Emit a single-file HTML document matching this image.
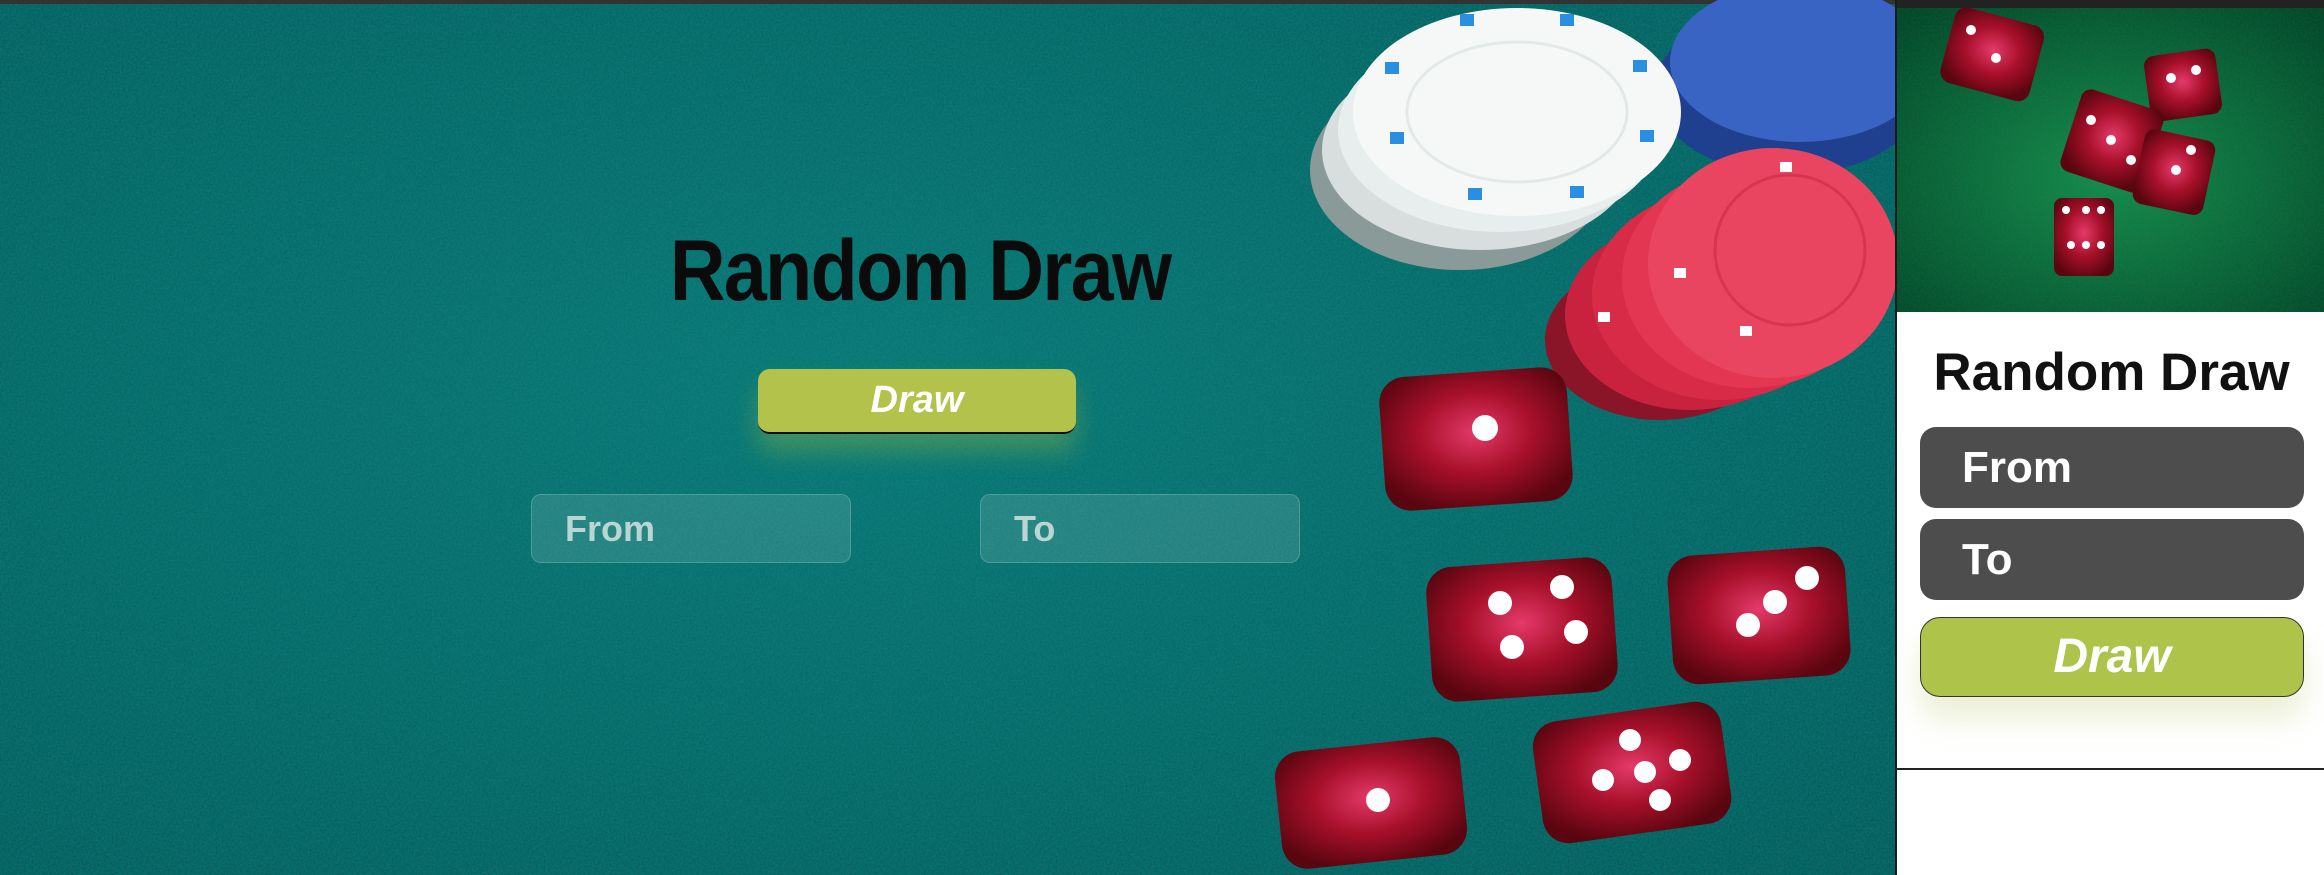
<!DOCTYPE html>
<html><head><meta charset="utf-8"><style>
*{margin:0;padding:0;box-sizing:border-box}
body{width:2324px;height:875px;overflow:hidden;background:#fff;font-family:"Liberation Sans",Arial,sans-serif;position:relative}
#bg{position:absolute;left:0;top:0}
.t1{position:absolute;left:560px;width:720px;top:222px;text-align:center;font-weight:bold;font-size:86px;color:#0b0b0b;letter-spacing:-2px;transform:scaleX(0.9)}
.b1{position:absolute;left:758px;top:369px;width:318px;height:65px;background:#b3c24a;border-radius:12px;border-bottom:2px solid #111;box-shadow:0 18px 25px rgba(160,190,60,.35);color:#fff;font-style:italic;font-weight:bold;font-size:38px;text-align:center;line-height:63px}
.in1{position:absolute;top:494px;width:320px;height:69px;background:rgba(255,255,255,.12);border:1px solid rgba(255,255,255,.18);border-radius:10px;color:#b9d6d2;font-size:36px;font-weight:bold;line-height:67px;padding-left:33px}
#panel{position:absolute;left:1895px;top:0;width:429px;height:875px;background:#fff;border-left:2px solid #1a1a1a}
.t2{position:absolute;left:0;width:429px;top:342px;text-align:center;font-weight:bold;font-size:53px;color:#111}
.in2{position:absolute;left:23px;width:384px;height:81px;background:#4d4d4d;border-radius:16px;color:#fff;font-weight:bold;font-size:44px;line-height:81px;padding-left:42px}
.b2{position:absolute;left:23px;top:617px;width:384px;height:80px;background:#aec34a;border:1.5px solid #333;border-radius:20px;color:#fff;font-style:italic;font-weight:bold;font-size:48px;text-align:center;line-height:77px;box-shadow:0 22px 30px rgba(200,210,140,.35)}
</style></head><body>
<svg id="bg" width="1896" height="875" viewBox="0 0 1896 875">
<defs>
<radialGradient id="felt" cx="45%" cy="45%" r="75%"><stop offset="0" stop-color="#0f706c"/><stop offset="1" stop-color="#09504e"/></radialGradient>
<radialGradient id="die" cx="50%" cy="45%" r="60%"><stop offset="0" stop-color="#e43a6a"/><stop offset=".5" stop-color="#a8102a"/><stop offset="1" stop-color="#5a0610"/></radialGradient>
<filter id="n"><feTurbulence type="fractalNoise" baseFrequency=".5" numOctaves="2"/><feColorMatrix values="0 0 0 0 0  0 0 0 0 .35  0 0 0 0 .35  0 0 0 .5 0"/></filter>
</defs>
<rect width="1896" height="875" fill="url(#felt)"/>
<rect width="1896" height="875" filter="url(#n)"/>
<rect width="1896" height="4" fill="#333"/>
<ellipse cx="1790" cy="90" rx="135" ry="85" fill="#1f3f8f"/>
<ellipse cx="1800" cy="62" rx="130" ry="80" fill="#3a64c4"/>
<ellipse cx="1460" cy="170" rx="150" ry="100" fill="#8a9a98"/>
<ellipse cx="1480" cy="150" rx="158" ry="100" fill="#d7dedd"/>
<ellipse cx="1500" cy="130" rx="162" ry="102" fill="#e8eeee"/>
<ellipse cx="1517" cy="112" rx="164" ry="104" fill="#f6f8f8"/>
<ellipse cx="1517" cy="112" rx="110" ry="70" fill="none" stroke="#e3e8e8" stroke-width="3"/>
<g fill="#2a8fe0"><rect x="1460" y="14" width="14" height="12"/><rect x="1560" y="14" width="14" height="12"/><rect x="1385" y="62" width="14" height="12"/><rect x="1633" y="60" width="14" height="12"/><rect x="1390" y="132" width="14" height="12"/><rect x="1640" y="130" width="14" height="12"/><rect x="1468" y="188" width="14" height="12"/><rect x="1570" y="186" width="14" height="12"/></g>
<ellipse cx="1660" cy="340" rx="115" ry="80" fill="#8a1428"/>
<ellipse cx="1690" cy="315" rx="125" ry="95" fill="#c8223e"/>
<ellipse cx="1720" cy="295" rx="128" ry="105" fill="#d82b48"/>
<ellipse cx="1750" cy="278" rx="128" ry="110" fill="#e23652"/>
<ellipse cx="1773" cy="263" rx="125" ry="115" fill="#ea4560"/>
<ellipse cx="1790" cy="250" rx="75" ry="75" fill="none" stroke="#d63450" stroke-width="3"/>
<g fill="#fff"><rect x="1674" y="268" width="12" height="10"/><rect x="1740" y="326" width="12" height="10"/><rect x="1780" y="162" width="12" height="10"/><rect x="1598" y="312" width="12" height="10"/></g>
<g>
<rect x="1382" y="372" width="188" height="134" rx="26" fill="url(#die)" transform="rotate(-4 1476 439)"/>
<circle cx="1485" cy="428" r="13" fill="#fff"/>
<rect x="1429" y="562" width="186" height="135" rx="26" fill="url(#die)" transform="rotate(-4 1522 630)"/>
<circle cx="1500" cy="603" r="12" fill="#fff"/><circle cx="1562" cy="587" r="12" fill="#fff"/><circle cx="1512" cy="647" r="12" fill="#fff"/><circle cx="1576" cy="632" r="12" fill="#fff"/>
<rect x="1670" y="551" width="178" height="129" rx="26" fill="url(#die)" transform="rotate(-4 1759 615)"/>
<circle cx="1807" cy="578" r="12" fill="#fff"/><circle cx="1775" cy="602" r="12" fill="#fff"/><circle cx="1748" cy="625" r="12" fill="#fff"/>
<rect x="1278" y="744" width="186" height="118" rx="26" fill="url(#die)" transform="rotate(-6 1371 803)"/>
<circle cx="1378" cy="800" r="12" fill="#fff"/>
<rect x="1537" y="711" width="190" height="123" rx="26" fill="url(#die)" transform="rotate(-8 1632 772)"/>
<circle cx="1630" cy="740" r="11" fill="#fff"/><circle cx="1680" cy="760" r="11" fill="#fff"/><circle cx="1645" cy="772" r="11" fill="#fff"/><circle cx="1603" cy="780" r="11" fill="#fff"/><circle cx="1660" cy="800" r="11" fill="#fff"/>
</g>
</svg>
<div class="t1">Random Draw</div>
<div class="b1">Draw</div>
<div class="in1" style="left:531px">From</div>
<div class="in1" style="left:980px">To</div>
<div id="panel">
<div style="position:absolute;left:0;top:0;width:429px;height:8px;background:#222"></div>
<svg style="position:absolute;left:0;top:8px" width="429" height="304" viewBox="1896 8 429 304">
<defs><radialGradient id="g2" cx="50%" cy="55%" r="70%"><stop offset="0" stop-color="#1b8a43"/><stop offset="1" stop-color="#06401c"/></radialGradient></defs>
<rect x="1896" y="8" width="429" height="304" fill="url(#g2)"/>
<rect x="1896" y="8" width="429" height="304" filter="url(#n)" opacity=".5"/>
<g fill="url(#die)">
<rect x="1945" y="15" width="92" height="78" rx="12" transform="rotate(15 1990 55)"/>
<rect x="2146" y="52" width="72" height="66" rx="10" transform="rotate(-8 2182 85)"/>
<rect x="2068" y="98" width="86" height="86" rx="10" transform="rotate(18 2111 141)"/>
<rect x="2137" y="134" width="72" height="76" rx="10" transform="rotate(12 2172 172)"/>
<rect x="2053" y="198" width="60" height="78" rx="8"/>
</g>
<g fill="#fff"><circle cx="1970" cy="30" r="5"/><circle cx="1995" cy="58" r="5"/><circle cx="2170" cy="78" r="5"/><circle cx="2195" cy="70" r="5"/><circle cx="2090" cy="120" r="5"/><circle cx="2110" cy="140" r="5"/><circle cx="2130" cy="160" r="5"/><circle cx="2065" cy="210" r="4"/><circle cx="2085" cy="210" r="4"/><circle cx="2100" cy="210" r="4"/><circle cx="2070" cy="245" r="4"/><circle cx="2085" cy="245" r="4"/><circle cx="2100" cy="245" r="4"/><circle cx="2175" cy="170" r="5"/><circle cx="2190" cy="150" r="5"/></g>
</svg>
<div class="t2">Random Draw</div>
<div class="in2" style="top:427px">From</div>
<div class="in2" style="top:519px">To</div>
<div class="b2">Draw</div>
<div style="position:absolute;left:-2px;top:768px;width:431px;height:2px;background:#222"></div>
</div>
</body></html>
